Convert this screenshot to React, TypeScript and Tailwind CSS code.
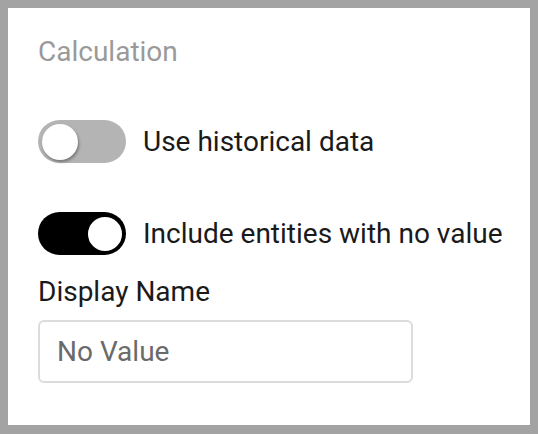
function Toggle({ on }: { on: boolean }) {
  return (
    <div
      className={
        on
          ? "w-[88px] h-[43px] rounded-full bg-black flex items-center justify-end pr-[2px] shrink-0"
          : "w-[88px] h-[43px] rounded-full bg-[#b4b4b4] flex items-center pl-[4px] shrink-0"
      }
    >
      <div
        className={
          on
            ? "w-[38px] h-[38px] rounded-full bg-white border-[2px] border-black"
            : "w-[36px] h-[36px] rounded-full bg-white shadow-[1px_2px_3px_rgba(0,0,0,0.35)]"
        }
      />
    </div>
  );
}

export default function App() {
  return (
    <div className="w-[538px] h-[434px] bg-[#a3a3a3] p-[8px] pb-[9px] font-['Roboto',sans-serif]">
      <div className="w-full h-full bg-white pl-[30px] pt-[28px]">
        <div className="text-[28px] leading-[32px] text-[#9a9a9a]">Calculation</div>

        <div className="flex items-center gap-[17px] mt-[52px]">
          <Toggle on={false} />
          <span className="text-[28px] leading-[32px] text-[#1a1a1a]">Use historical data</span>
        </div>

        <div className="flex items-center gap-[17px] mt-[49px]">
          <Toggle on={true} />
          <span className="text-[28px] leading-[32px] text-[#1a1a1a]">Include entities with no value</span>
        </div>

        <div className="text-[28px] leading-[32px] text-[#1a1a1a] mt-[21px]">Display Name</div>

        <div className="mt-[12px] w-[375px] h-[63px] rounded-[6px] border-[2px] border-[#dcdcdc] flex items-center px-[17px]">
          <span className="text-[28px] leading-[32px] text-[#6a6a6a]">No Value</span>
        </div>
      </div>
    </div>
  );
}
